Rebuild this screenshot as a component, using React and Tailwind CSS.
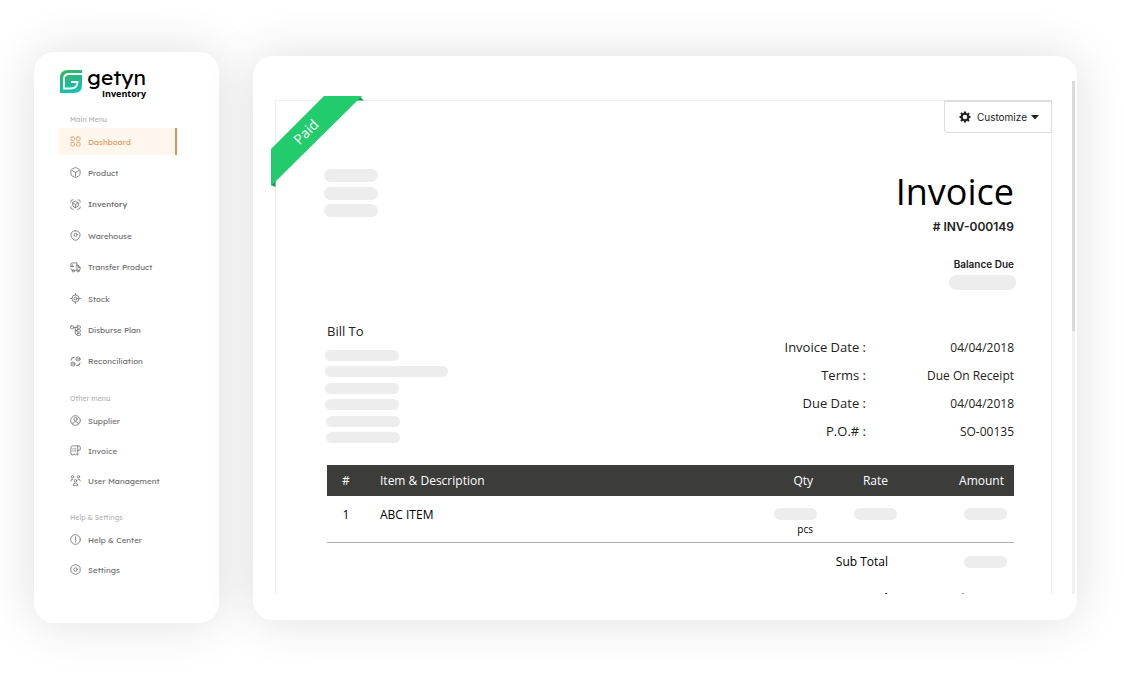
import React from 'react';
import clsx from 'clsx';

const icons = {
    dashboard: (
        <>
            <rect x="2" y="2" width="8" height="8" rx="2.5" />
            <rect x="14" y="2" width="8" height="8" rx="2.5" />
            <rect x="2" y="14" width="8" height="8" rx="2.5" />
            <rect x="14" y="14" width="8" height="8" rx="2.5" />
        </>
    ),
    product: (
        <>
            <path d="M10 1.8 Q12 .8 14 1.8 L20 5 Q22 6.2 22 8.4 V15.6 Q22 17.8 20 19 L14 22.2 Q12 23.2 10 22.2 L4 19 Q2 17.8 2 15.6 V8.4 Q2 6.2 4 5 Z" />
            <path d="M5 8 L12 12 L19 8 M12 12 V20" />
        </>
    ),
    inventory: (
        <>
            <path d="M2 7 V5 Q2 2 5 2 H7 M17 2 H19 Q22 2 22 5 V7 M22 17 V19 Q22 22 19 22 H17 M7 22 H5 Q2 22 2 19 V17" />
            <path d="M12 5 L18 8.5 V15.5 L12 19 L6 15.5 V8.5 Z" />
            <path d="M6 8.5 L12 12 L18 8.5 M12 12 V19" />
        </>
    ),
    warehouse: (
        <>
            <path d="M12 1.5 C6 1.5 2 5.5 2 10.8 C2 16 7.5 22.5 12 22.5 C16.5 22.5 22 16 22 10.8 C22 5.5 18 1.5 12 1.5 Z" />
            <circle cx="12" cy="10.5" r="3.4" />
        </>
    ),
    transfer: (
        <>
            <path d="M2 10 V5 Q2 2 5 2 H15 V18 H9 M5 18 Q2 18 2 15 M15 7 H18 L22 12 V16 Q22 18 20 18" />
            <path d="M2 10 H8 M5 6 V10 M18 7 V12 H22" />
            <circle cx="7" cy="19.5" r="2.4" />
            <circle cx="17.5" cy="19.5" r="2.4" />
        </>
    ),
    stock: (
        <>
            <circle cx="12" cy="12" r="7.8" />
            <circle cx="12" cy="12" r="3.2" />
            <path d="M12 1 V4 M12 20 V23 M1 12 H4 M20 12 H23" />
        </>
    ),
    disburse: (
        <>
            <rect x="1" y="2" width="7" height="6" rx="2" />
            <rect x="15" y="2" width="8" height="5" rx="2" />
            <rect x="15" y="10" width="8" height="5" rx="2" />
            <rect x="15" y="18" width="8" height="5" rx="2" />
            <path d="M8 5 H15 M11.5 5 V18 Q11.5 20.5 14 20.5 H15 M11.5 12.5 H15" />
        </>
    ),
    reconciliation: (
        <>
            <circle cx="17.5" cy="6.5" r="4.5" />
            <circle cx="6.5" cy="17.5" r="4.5" />
            <path d="M2 9 Q2 2.5 9 2.5 M22 15 Q22 21.5 15 21.5 M15 21.5 L17 19 M9 2.5 L7 5" />
            <path d="M15.5 6.5 H19.5 M4.5 17.5 H8.5" />
        </>
    ),
    supplier: (
        <>
            <circle cx="12" cy="12" r="10.5" />
            <circle cx="12" cy="9" r="3.6" />
            <path d="M5.5 19.5 Q6.5 14.5 12 14.5 Q17.5 14.5 18.5 19.5" />
        </>
    ),
    invoice: (
        <>
            <path d="M17 2 V22 L14 20 L11.5 22 L9 20 L6 22 L2 20 V6 Q2 2 6 2 H19 Q22.5 2 22.5 5 V9 Q22.5 11.5 20 11.5 H17" />
            <path d="M6 8.5 H7 M10 8.5 H13 M6 13 H7 M10 13 H13" />
        </>
    ),
    users: (
        <>
            <circle cx="12" cy="12.5" r="2.8" />
            <path d="M7 22.5 Q7 17.5 12 17.5 Q17 17.5 17 22.5 Z" />
            <circle cx="5.5" cy="4" r="2.6" />
            <circle cx="18.5" cy="4" r="2.6" />
            <path d="M1.5 13 Q1.5 9 6 9 M22.5 13 Q22.5 9 18 9" />
        </>
    ),
    help: (
        <>
            <circle cx="12" cy="12" r="10.5" />
            <path d="M12 6.5 V13.5 M12 16.5 V17.5" />
        </>
    ),
    settings: (
        <>
            <path d="M10 1.8 Q12 .8 14 1.8 L20 5 Q22 6.2 22 8.4 V15.6 Q22 17.8 20 19 L14 22.2 Q12 23.2 10 22.2 L4 19 Q2 17.8 2 15.6 V8.4 Q2 6.2 4 5 Z" />
            <circle cx="12" cy="12" r="3.8" />
        </>
    ),
};

const mainMenu = [
    { label: "Dashboard", icon: "dashboard", active: true },
    { label: "Product", icon: "product" },
    { label: "Inventory", icon: "inventory", strong: true },
    { label: "Warehouse", icon: "warehouse" },
    { label: "Transfer Product", icon: "transfer" },
    { label: "Stock", icon: "stock" },
    { label: "Disburse Plan", icon: "disburse" },
    { label: "Reconciliation", icon: "reconciliation" },
];

const otherMenu = [
    { label: "Supplier", icon: "supplier" },
    { label: "Invoice", icon: "invoice" },
    { label: "User Management", icon: "users" },
];

const helpMenu = [
    { label: "Help & Center", icon: "help" },
    { label: "Settings", icon: "settings" },
];

const invoiceMeta = [
    { label: "Invoice Date :", value: "04/04/2018" },
    { label: "Terms :", value: "Due On Receipt" },
    { label: "Due Date :", value: "04/04/2018" },
    { label: "P.O.# :", value: "SO-00135" },
];

const MenuItem = ({ item }) => (
    <li>
        <a
            href="#"
            className={clsx(
                "flex h-[27px] items-center gap-[7px] border-r-2 pl-3 text-[8px]",
                item.active
                    ? "border-[#e0914f] bg-[#fff6ee] text-[#e39a60]"
                    : "border-transparent text-[#6e6e6e]",
                item.strong && "font-medium text-[#5c5c5c]"
            )}
        >
            <svg
                viewBox="0 0 24 24"
                className="h-[11px] w-[11px] shrink-0"
                fill="none"
                stroke="currentColor"
                strokeWidth="1.8"
                strokeLinecap="round"
                strokeLinejoin="round"
            >
                {icons[item.icon]}
            </svg>
            {item.label}
        </a>
    </li>
);

const MenuSection = ({ title, items, listClass }) => (
    <section>
        <h2 className="h-[17px] pl-3 text-[7px] leading-[17px] text-[#b3b3b3]">{title}</h2>
        <ul className={clsx("flex flex-col", listClass)}>
            {items.map((item) => (
                <MenuItem key={item.label} item={item} />
            ))}
        </ul>
    </section>
);

const Logo = () => (
    <div className="flex gap-1 pl-[2px]">
        <svg viewBox="0 0 22 23" className="h-[23px] w-[22px]" fill="none">
            <defs>
                <linearGradient id="leaf" x1="0.3" y1="0" x2="0.6" y2="1">
                    <stop offset="0" stopColor="#35b862" />
                    <stop offset="0.45" stopColor="#27b78c" />
                    <stop offset="1" stopColor="#12c4b4" />
                </linearGradient>
            </defs>
            <path d="M8 0 H22 V15 Q22 23 14 23 H0 V8 Q0 0 8 0 Z" fill="url(#leaf)" />
            <path d="M22 4 H9 Q4 4 4 9 V18.5 H10 Q17.5 18.5 17.5 12 H11" stroke="#fff" strokeWidth="1.8" />
        </svg>
        <div className="flex w-[60px] flex-col items-end">
            <span className="h-[14px] font-['Lexend','Inter',sans-serif] text-[21px] leading-[14px] text-black">getyn</span>
            <span className="mt-[5px] font-['Open_Sans'] text-[9px] leading-[10px] font-bold text-black">Inventory</span>
        </div>
    </div>
);

const Sidebar = () => (
    <aside className="w-[185px] shrink-0 rounded-[20px] bg-white pt-[18px] pr-[42px] pb-10 pl-6 font-['Lexend','Inter',sans-serif] shadow-[0_0_50px_rgba(0,0,0,0.13)]">
        <Logo />
        <nav className="mt-[12px] flex flex-col gap-[15px]">
            <MenuSection title="Main Menu" items={mainMenu} listClass="h-[247px] justify-between" />
            <MenuSection title="Other menu" items={otherMenu} listClass="gap-[3px]" />
            <MenuSection title="Help & Settings" items={helpMenu} listClass="gap-[3px]" />
        </nav>
    </aside>
);

const Ribbon = () => (
    <div className="absolute -top-[5px] -left-[5px] h-[92px] w-[94px]">
        <svg viewBox="0 0 94 92" className="h-full w-full">
            <path d="M88 0 L93 4.5 H86 Z M0 89 L4.5 91 V84 Z" fill="#15964a" />
            <path d="M53 0 H91 L0 90 V53 Z" fill="#22cc6d" />
        </svg>
        <span className="absolute top-[26px] left-[17px] w-9 -rotate-45 text-center text-[14px] leading-5 text-white">Paid</span>
    </div>
);

// stands in for a hidden value
const Blank = ({ className }) => (
    <span className={clsx("block rounded-full bg-[#ededed]", className)}></span>
);

const CustomizeButton = () => (
    <button
        type="button"
        className="flex h-[33px] items-center rounded-bl-[4px] border border-t-2 border-[#dedede] pr-3 pl-[14px] font-['Inter'] text-[10px] text-[#222]"
    >
        <svg viewBox="0 0 24 24" className="mr-[6px] h-3 w-3" fill="currentColor">
            <path
                fillRule="evenodd"
                d="M10 1 H14 L14.6 4.2 L16.3 4.9 L19 3 L21.5 5.5 L19.5 8 L20.2 9.5 L23 10 V14 L20.2 14.6 L19.5 16.2 L21.3 18.8 L18.8 21.3 L16.2 19.5 L14.6 20.2 L14 23 H10 L9.4 20.2 L7.8 19.5 L5.2 21.3 L2.7 18.8 L4.5 16.2 L3.8 14.6 L1 14 V10 L3.8 9.5 L4.5 7.8 L2.7 5.2 L5.2 2.7 L7.8 4.5 L9.4 3.8 Z M12 7.5 A4.5 4.5 0 1 0 12 16.5 A4.5 4.5 0 1 0 12 7.5 Z"
            />
        </svg>
        Customize
        <svg viewBox="0 0 8 5" className="ml-1 h-[5px] w-2" fill="currentColor">
            <path d="M0 0 H8 L4 4.6 Z" />
        </svg>
    </button>
);

const ItemsTable = () => (
    <table className="mt-5 w-full table-fixed text-[12px] leading-4 text-black">
        <colgroup>
            <col className="w-[38px]" />
            <col />
            <col className="w-[80px]" />
            <col className="w-[80px]" />
            <col className="w-[117px]" />
        </colgroup>
        <thead className="bg-[#3c3d3a] text-white">
            <tr className="h-[31px]">
                <th className="font-medium">#</th>
                <th className="pl-[15px] text-left font-medium">Item &amp; Description</th>
                <th className="pr-1 text-right font-medium">Qty</th>
                <th className="pr-[9px] text-right font-medium">Rate</th>
                <th className="pr-[10px] text-right font-medium">Amount</th>
            </tr>
        </thead>
        <tbody>
            <tr className="h-[46px] border-b border-[#b0b0b0] align-top">
                <td className="pt-[11px] text-center">1</td>
                <td className="pt-[11px] pl-[15px]">ABC ITEM</td>
                <td className="pt-3">
                    <Blank className="ml-auto h-3 w-[43px]" />
                    <span className="mt-px block pr-1 text-right text-[10px] leading-4">pcs</span>
                </td>
                <td className="pt-3">
                    <Blank className="ml-auto h-3 w-[43px]" />
                </td>
                <td className="pt-3 pr-[7px]">
                    <Blank className="ml-auto h-3 w-[43px]" />
                </td>
            </tr>
        </tbody>
        <tfoot>
            <tr className="h-10">
                <td colSpan="4" className="pr-[9px] text-right">Sub Total</td>
                <td className="pr-[7px]">
                    <Blank className="ml-auto h-3 w-[43px]" />
                </td>
            </tr>
            <tr className="h-[34px] font-bold">
                <td colSpan="4" className="pr-[9px] text-right">Total</td>
                <td className="pr-[10px] text-right">$200.00</td>
            </tr>
        </tfoot>
    </table>
);

const InvoicePaper = () => (
    <article className="relative mt-[19px] mr-5 ml-1 flex-1 self-start border border-[#ececec] pb-10 font-['Open_Sans','Noto_Sans',sans-serif]">
        <Ribbon />
        <div className="-mt-px -mr-px flex justify-end">
            <CustomizeButton />
        </div>

        <div className="pr-[37px] pl-[51px]">
            <header className="flex items-start justify-between pt-9">
                <div className="-ml-[3px] flex h-12 flex-col justify-between">
                    <Blank className="h-[13px] w-[54px]" />
                    <Blank className="h-[13px] w-[54px]" />
                    <Blank className="h-[13px] w-[54px]" />
                </div>
                <div className="flex flex-col items-end">
                    <h1 className="text-[36px] leading-[46px] text-black">Invoice</h1>
                    <p className="mt-[2px] font-['Inter'] text-[12px] leading-5 font-semibold text-[#222]"># INV-000149</p>
                    <p className="mt-[17px] font-['Inter'] text-[10px] leading-5 font-semibold text-[#222]">Balance Due</p>
                    <Blank className="mt-px -mr-[2px] h-[15px] w-[67px]" />
                </div>
            </header>

            <div className="mt-8 flex justify-between">
                <section>
                    <h2 className="text-[13px] leading-[18px] text-[#222]">Bill To</h2>
                    <div className="mt-[10px] -ml-[2px] flex h-[93px] flex-col justify-between">
                        <Blank className="h-[11px] w-[74px]" />
                        <Blank className="h-[11px] w-[123px]" />
                        <Blank className="h-[11px] w-[74px]" />
                        <Blank className="h-[11px] w-[74px]" />
                        <Blank className="ml-px h-[11px] w-[74px]" />
                        <Blank className="ml-px h-[11px] w-[74px]" />
                    </div>
                </section>
                <dl className="mt-[11px] grid auto-rows-[28px] grid-cols-[auto_148px] items-baseline text-right leading-7 text-[#222]">
                    {invoiceMeta.map((row) => (
                        <React.Fragment key={row.label}>
                            <dt className="text-[13px]">{row.label}</dt>
                            <dd className="text-[12px]">{row.value}</dd>
                        </React.Fragment>
                    ))}
                </dl>
            </div>

            <ItemsTable />
        </div>
    </article>
);

const App = () => {
    return (
        <div className="flex items-start gap-[34px] bg-white pt-[52px] pr-[47px] pb-[74px] pl-[34px]">
            <Sidebar />
            <main className="mt-1 min-w-0 flex-1 rounded-[20px] bg-white pt-[25px] pr-[2px] pb-[26px] pl-[18px] shadow-[0_0_50px_rgba(0,0,0,0.13)]">
                {/* only the top of the invoice fits in the viewer */}
                <div className="flex h-[513px] overflow-hidden">
                    <InvoicePaper />
                    <div className="w-[3px] bg-[#f1f1f1]">
                        <div className="h-[250px] bg-[#dadada]"></div>
                    </div>
                </div>
            </main>
        </div>
    );
};

export default App;
